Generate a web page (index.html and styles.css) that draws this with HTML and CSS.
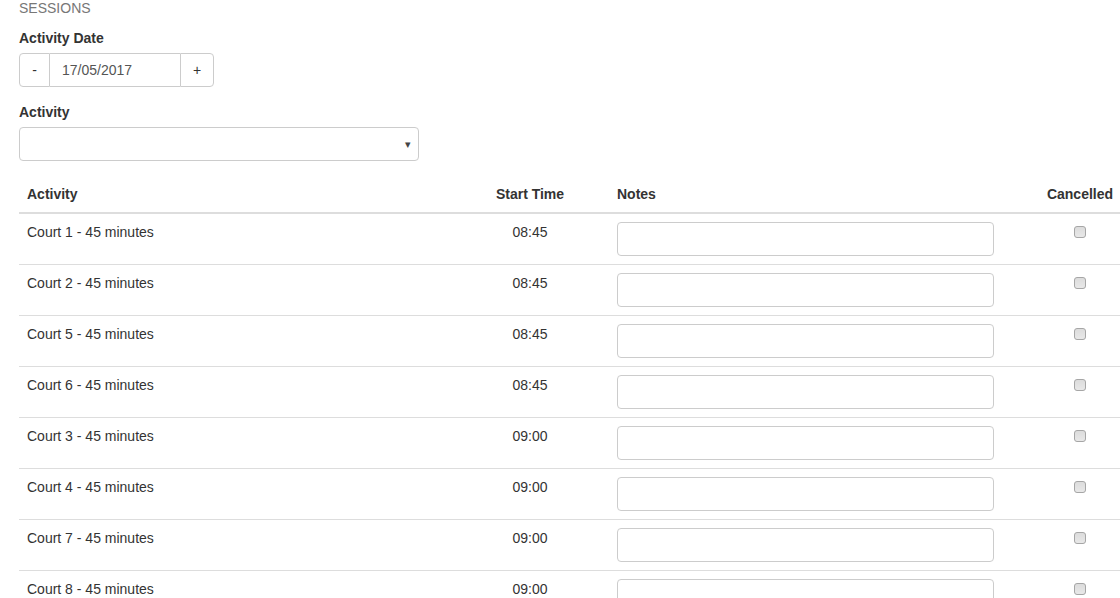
FILE: index.html
```html
<!DOCTYPE html>
<html>
<head>
<meta charset="utf-8">
<link rel="stylesheet" href="styles.css">
</head>
<body>
<div class="page">
  <div class="section-title">SESSIONS</div>
  <div class="form-group">
    <label class="label">Activity Date</label>
    <div class="input-group">
      <button class="btn btn-left">-</button>
      <input class="date-input" type="text" value="17/05/2017">
      <button class="btn btn-right">+</button>
    </div>
  </div>
  <div class="form-group">
    <label class="label">Activity</label>
    <div class="select">
      <span class="caret">&#9662;</span>
    </div>
  </div>
  <table class="sessions">
    <colgroup>
      <col class="c-activity">
      <col class="c-time">
      <col class="c-notes">
      <col class="c-cancel">
    </colgroup>
    <thead>
      <tr>
        <th class="left">Activity</th>
        <th class="center">Start Time</th>
        <th class="left">Notes</th>
        <th class="center">Cancelled</th>
      </tr>
    </thead>
    <tbody>
      <tr><td>Court 1 - 45 minutes</td><td class="center">08:45</td><td><input class="note" type="text"></td><td class="center"><span class="check"></span></td></tr>
      <tr><td>Court 2 - 45 minutes</td><td class="center">08:45</td><td><input class="note" type="text"></td><td class="center"><span class="check"></span></td></tr>
      <tr><td>Court 5 - 45 minutes</td><td class="center">08:45</td><td><input class="note" type="text"></td><td class="center"><span class="check"></span></td></tr>
      <tr><td>Court 6 - 45 minutes</td><td class="center">08:45</td><td><input class="note" type="text"></td><td class="center"><span class="check"></span></td></tr>
      <tr><td>Court 3 - 45 minutes</td><td class="center">09:00</td><td><input class="note" type="text"></td><td class="center"><span class="check"></span></td></tr>
      <tr><td>Court 4 - 45 minutes</td><td class="center">09:00</td><td><input class="note" type="text"></td><td class="center"><span class="check"></span></td></tr>
      <tr><td>Court 7 - 45 minutes</td><td class="center">09:00</td><td><input class="note" type="text"></td><td class="center"><span class="check"></span></td></tr>
      <tr><td>Court 8 - 45 minutes</td><td class="center">09:00</td><td><input class="note" type="text"></td><td class="center"><span class="check"></span></td></tr>
    </tbody>
  </table>
</div>
</body>
</html>
```

FILE: styles.css
```css
html, body {
  margin: 0;
  padding: 0;
  overflow: hidden;
  background: #fff;
}
body {
  font-family: "Liberation Sans", Arial, sans-serif;
  font-size: 14px;
  line-height: 20px;
  color: #333;
}
.page {
  padding-left: 19px;
  width: 1139px;
}
.section-title {
  color: #777;
  margin-top: -2px;
  height: 20px;
  margin-bottom: 10px;
}
.form-group {
  margin-bottom: 15px;
}
.label {
  display: block;
  font-weight: bold;
  margin-bottom: 5px;
}
.input-group {
  display: inline-flex;
  height: 34px;
  vertical-align: top;
}
.form-group .input-group + * { display: block; }
.btn {
  box-sizing: border-box;
  flex: none;
  width: 31px;
  height: 34px;
  background: #fff;
  border: 1px solid #ccc;
  font-family: inherit;
  font-size: 14px;
  color: #333;
  padding: 0;
  margin: 0;
}
.btn-left {
  border-radius: 4px 0 0 4px;
}
.btn-right {
  width: 34px;
  border-radius: 0 4px 4px 0;
}
.date-input {
  box-sizing: border-box;
  flex: none;
  width: 130px;
  height: 34px;
  border: 1px solid #ccc;
  border-left: 0;
  border-right: 0;
  padding: 0 12px;
  margin: 0;
  font-family: inherit;
  font-size: 14px;
  color: #555;
  outline: none;
}
.select {
  box-sizing: border-box;
  width: 400px;
  height: 34px;
  border: 1px solid #ccc;
  border-radius: 4px;
  display: flex;
  justify-content: flex-end;
  align-items: center;
  padding-right: 7px;
}
.caret {
  font-size: 11px;
  color: #444;
  line-height: 10px;
}
.sessions {
  border-collapse: collapse;
  table-layout: fixed;
  width: 1139px;
}
.c-activity { width: 432px; }
.c-time { width: 158px; }
.c-notes { width: 393px; }
.c-cancel { width: 156px; }
.sessions th {
  font-weight: bold;
  padding: 8px;
  border-bottom: 2px solid #ddd;
  vertical-align: bottom;
}
.sessions td {
  padding: 8px;
  border-top: 1px solid #ddd;
  vertical-align: top;
}
.left { text-align: left; }
.center { text-align: center; }
.note {
  box-sizing: border-box;
  display: block;
  width: 377px;
  height: 34px;
  border: 1px solid #ccc;
  border-radius: 4px;
  margin: 0;
  padding: 6px 12px;
  outline: none;
}
.check {
  display: inline-block;
  box-sizing: border-box;
  width: 12px;
  height: 12px;
  margin-top: 4px;
  border: 1px solid #a6a6a6;
  border-radius: 3px;
  background: linear-gradient(#dcdcdc, #e8e8e8);
  vertical-align: top;
}
```
